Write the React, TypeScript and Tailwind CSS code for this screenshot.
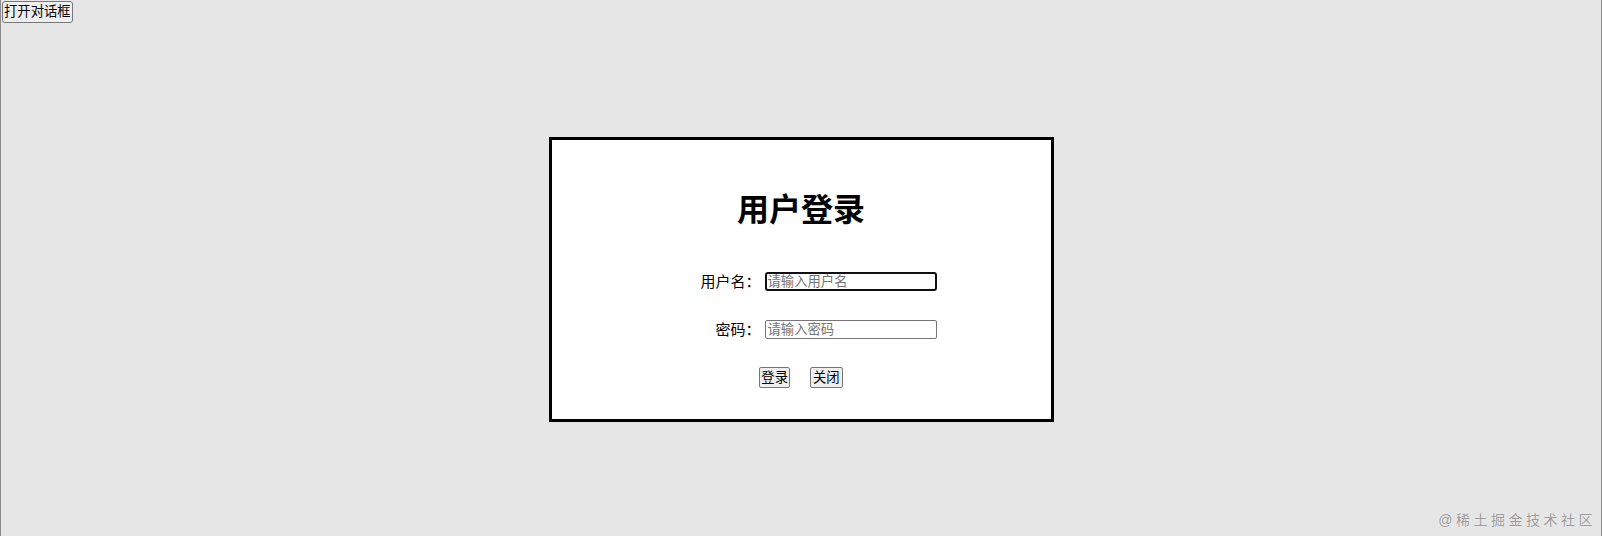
import { useState } from "react";

const font = "font-['Liberation_Sans','Noto_Sans_CJK_SC',sans-serif]";

export default function App() {
  const [open, setOpen] = useState(true);
  const [user, setUser] = useState("");
  const [pwd, setPwd] = useState("");

  return (
    <div className={`relative min-h-screen h-[536px] overflow-hidden bg-[#e6e6e6] border-l border-r border-[#8a8a8a] ${font}`}>
      <button
        onClick={() => setOpen(true)}
        className="ml-px mt-px block h-[22px] px-px rounded-[3px] border border-[#767676] bg-[#efefef] text-[13.33px] leading-[18px] text-black"
      >
        打开对话框
      </button>

      {open && (
        <div className="mx-auto mt-[114px] w-[505px] h-[285px] border-[3px] border-black bg-white flex flex-col items-center pt-[50px]">
          <h1 className="h-10 text-[32px] leading-10 font-bold text-black">用户登录</h1>

          <div className="mt-[42px] flex items-center gap-1 h-[19px]">
            <label className="w-[95px] text-right text-[15px] leading-[19px] text-black">用户名：</label>
            <input
              value={user}
              onChange={(e) => setUser(e.target.value)}
              placeholder="请输入用户名"
              className="w-[172px] h-[19px] px-px rounded-[3px] border-2 border-[#101010] bg-white text-[13.33px] leading-[15px] outline-none placeholder:text-[#757575]"
            />
          </div>

          <div className="mt-[29px] flex items-center gap-1 h-[19px]">
            <label className="w-[95px] text-right text-[15px] leading-[19px] text-black">密码：</label>
            <input
              type="password"
              value={pwd}
              onChange={(e) => setPwd(e.target.value)}
              placeholder="请输入密码"
              className="w-[172px] h-[19px] px-[2px] rounded-[2px] border border-[#767676] bg-white text-[13.33px] leading-[17px] outline-none placeholder:text-[#757575]"
            />
          </div>

          <div className="mt-[28px] flex items-center gap-5">
            <button className="h-[21px] px-px rounded-[2px] border border-[#767676] bg-[#efefef] text-[13.33px] leading-[17px] text-black">
              登录
            </button>
            <button
              onClick={() => setOpen(false)}
              className="h-[21px] px-[2px] rounded-[2px] border border-[#767676] bg-[#efefef] text-[13.33px] leading-[17px] text-black"
            >
              关闭
            </button>
          </div>
        </div>
      )}

      <div className="absolute right-[5px] bottom-[8px] text-[14px] leading-[16px] tracking-[3.5px] text-[#9a9a9a] [text-shadow:0_0_1px_#ffffff]">
        @稀土掘金技术社区
      </div>
    </div>
  );
}
